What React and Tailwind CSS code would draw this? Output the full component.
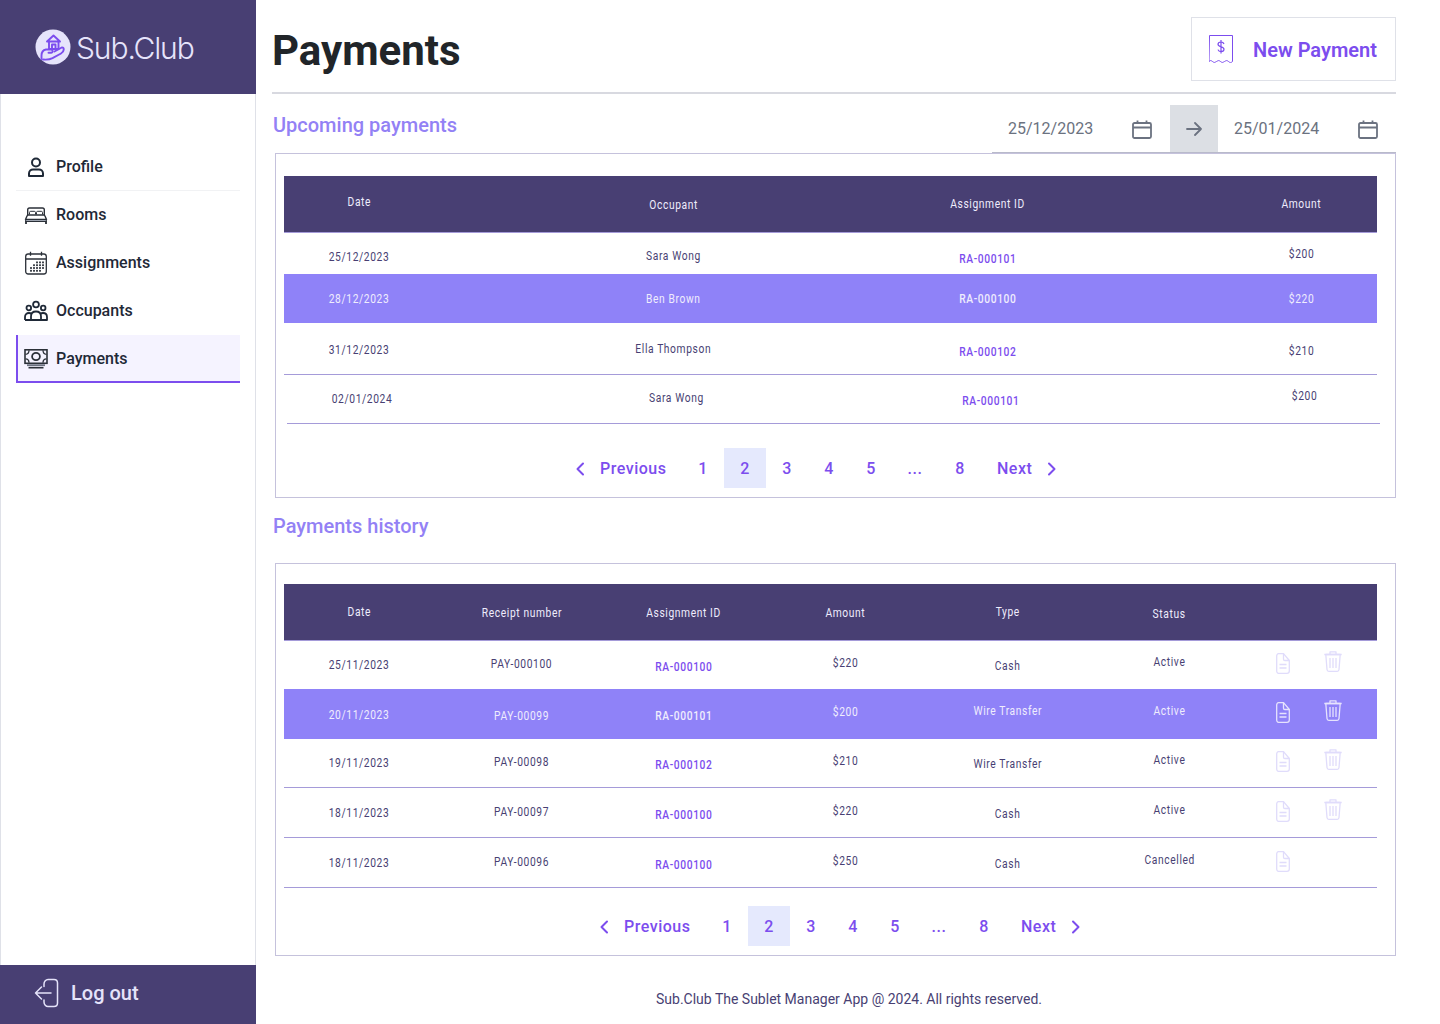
import React from "react";

const roboto = "font-['Roboto','Liberation_Sans',sans-serif]";

function Logo() {
  return (
    <svg width="36" height="36" viewBox="0 0 36 36" fill="none">
      <circle cx="18" cy="18" r="17.500" fill="#e6e4fb" />
      <g stroke="#7c4dee" strokeWidth="1.900" strokeLinejoin="round" strokeLinecap="round">
        <path d="M12 12.500 18.500 6.500 25 12.500Z" />
        <path d="M14 12.500V20H23.500V12.500" />
        <path d="M17 20v-4.500h3.500V20" />
        <path d="M6.500 30v-3.500c0-3 2-5.500 4.500-6h5c2 0 2.500 3 0 3.200h-2.500" />
        <path d="M8 30.500c3.500 .3 7 0 9.500-1.300l8.500-4.700c3.500-2 3.500-6.500 .8-6l-7.300 4" />
      </g>
    </svg>
  );
}

const iconCls = "shrink-0";
function UserIcon() {
  return (
    <svg className={iconCls} width="24" height="24" viewBox="0 0 24 24" fill="none" stroke="#1f2937" strokeWidth="2">
      <circle cx="12" cy="7.500" r="4" />
      <path d="M5 21v-2.500c0-2.500 2-4 4-4h6c2 0 4 1.500 4 4V21Z" strokeLinejoin="round" />
    </svg>
  );
}
function BedIcon() {
  return (
    <svg className={iconCls} width="24" height="24" viewBox="0 0 24 24" fill="none" stroke="#2b3038" strokeWidth="1.400">
      <path d="M3.700 12V6.800C3.700 5.500 4.500 5 5.500 5h13c1 0 1.800.5 1.800 1.800V12" />
      <path d="M5.500 11.500V9.500c0-.8.500-1.200 1.200-1.200h3.600c.7 0 1.200.4 1.200 1.200v2M12.500 11.500V9.500c0-.8.500-1.200 1.200-1.200h3.600c.7 0 1.200.4 1.200 1.200v2" strokeWidth="1" />
      <path d="M1.500 16.500 3 13c.2-.6.600-1 1.300-1h15.400c.7 0 1.100.4 1.300 1L22.500 16.500Z" strokeLinejoin="round" />
      <path d="M1.700 16.500h20.600v2H1.700Z" fill="#9ca3af" strokeWidth="1" />
      <path d="M2 18v3M22 18v3" strokeWidth="1.800" />
    </svg>
  );
}
function CalGridIcon() {
  const dots = [[7, 17], [10, 17], [13, 17], [16, 17], [7, 19.8], [10, 19.8], [13, 19.8], [10, 14.200], [13, 14.200], [16, 14.200], [19, 14.200], [19, 17], [13, 11.400], [16, 11.400], [19, 11.400], [16, 19.8]];
  return (
    <svg className={iconCls} width="24" height="24" viewBox="0 0 24 24" fill="none" stroke="#2b3038" strokeWidth="1.300">
      <rect x="1.700" y="3" width="20.600" height="20" rx="2.500" />
      <path d="M2 8h20M6.500 .8v4M17.500 .8v4" />
      {dots.map(([x, y], i) => (
        <rect key={i} x={x - 0.9} y={y - 0.9} width="1.800" height="1.800" fill="#2b3038" stroke="none" />
      ))}
    </svg>
  );
}
function GroupIcon() {
  return (
    <svg className={iconCls} width="24" height="24" viewBox="0 0 24 24" fill="none" stroke="#1f2937" strokeWidth="1.800">
      <circle cx="12" cy="5.500" r="2.900" />
      <circle cx="4.800" cy="9" r="2.300" />
      <circle cx="19.200" cy="9" r="2.300" />
      <path d="M7 21v-3.500c0-3 2-5 5-5s5 2 5 5V21Z" strokeLinejoin="round" />
      <path d="M1 21h22v-3c0-2.500-1.500-4-4-4-1 0-1.800.2-2.500.8M7.500 14.800C6.800 14.200 6 14 5 14c-2.500 0-4 1.500-4 4v3" strokeLinejoin="round" />
    </svg>
  );
}
function MoneyIcon() {
  return (
    <svg className={iconCls} width="24" height="24" viewBox="0 0 24 24" fill="none" stroke="#2b3038" strokeWidth="1.600">
      <rect x="1" y="2.800" width="22" height="13.500" strokeWidth="1.600" />
      <path d="M1.500 7.300c2 0 3.500-1.500 3.500-4M22.500 7.300c-2 0-3.500-1.500-3.500-4M1.500 11.800c2 0 3.500 1.500 3.500 4M22.500 11.800c-2 0-3.500 1.500-3.500 4" strokeWidth="1.300" />
      <ellipse cx="12" cy="9.500" rx="3.900" ry="3.600" strokeWidth="1.800" />
      <path d="M3 18.200h18" stroke="#6b7280" strokeWidth="1.800" />
      <path d="M4.500 20.700h15" stroke="#2b3038" strokeWidth="1.600" />
    </svg>
  );
}
function LogoutIcon() {
  return (
    <svg width="26" height="30" viewBox="0 0 26 30" fill="none" stroke="#e5e3fa" strokeWidth="1.500" strokeLinecap="round" strokeLinejoin="round">
      <path d="M10 8.500V6c0-2.500 2-4.500 4-4.500h6c2 0 3.500 1.500 3.500 3.500v20c0 2-1.500 3.500-3.500 3.500h-6c-2 0-4-2-4-4.500v-2" />
      <path d="M17 15H1.500M7.500 9 1.500 15l6 6" />
    </svg>
  );
}
function CalendarIcon() {
  return (
    <svg width="20" height="20" viewBox="0 0 20 20" fill="none" stroke="#6b7280" strokeWidth="1.800">
      <rect x="1" y="3" width="18" height="15" rx="1.500" />
      <path d="M1 7.500h18M5.500 .5V4M14.500 .5V4" />
    </svg>
  );
}
function ReceiptIcon() {
  return (
    <svg width="24" height="28" viewBox="0 0 24 28" fill="none" stroke="#7c4dee" strokeWidth="1">
      <path d="M.5.500h23v26c-2 1.500-2 1.500-4 0s-2-1-4 0-2 1.500-4 0-2-1-4 0-2 1.500-4 0-2-1-3.500 0Z" />
      <path d="M15 9c-.5-1.500-1.800-2-3-2-1.700 0-3 .8-3 2.300s1.300 2 3 2.500 3 1 3 2.500-1.300 2.300-3 2.300c-1.200 0-2.500-.5-3-2M12 5v13.500" strokeWidth="1.200" />
    </svg>
  );
}
function ArrowIcon() {
  return (
    <svg width="16" height="14" viewBox="0 0 16 14" fill="none" stroke="#6b7280" strokeWidth="1.800" strokeLinecap="round" strokeLinejoin="round">
      <path d="M1 7h14M9 1l6 6-6 6" />
    </svg>
  );
}
function Chevron({ left }) {
  return (
    <svg width="10" height="14" viewBox="0 0 10 14" fill="none" stroke="#7c4dee" strokeWidth="2" strokeLinecap="round" strokeLinejoin="round" className="mt-[1px]">
      {left ? <path d="M8 1.500 2.500 7 8 12.500" /> : <path d="M2 1.500 7.500 7 2 12.500" />}
    </svg>
  );
}
function DocIcon({ hi }) {
  const c = hi ? "#e6e3fd" : "#e0dcfb";
  return (
    <svg width="14" height="21" viewBox="0 0 14 21" fill="none" stroke={c} strokeWidth="1.300" strokeLinejoin="round">
      <path d="M2.500.7H7.500L13.300 7.500V18c0 1.300-1 2.300-2.300 2.300H2.500C1.500 20.300.7 19.300.7 18V3c0-1.300.8-2.300 1.800-2.300Z" />
      <path d="M7.500.7V6.200c0 .8.500 1.300 1.300 1.300h4.500M3.500 11.500h7M3.500 15h7" />
    </svg>
  );
}
function TrashIcon({ hi }) {
  const c = hi ? "#e6e3fd" : "#e0dcfb";
  return (
    <svg width="18" height="21" viewBox="0 0 18 21" fill="none" stroke={c} strokeWidth="1.300" strokeLinejoin="round">
      <path d="M.3 3.500h17.400M6 3.500V.8h6v2.700" />
      <path d="M1.800 3.500 3 18.500c.1 1 .8 1.800 1.800 1.800h8.400c1 0 1.700-.8 1.800-1.800l1.200-15Z" />
      <path d="M6 7v10M9 7v10M12 7v10" />
    </svg>
  );
}

const nav = [
  { label: "Profile", Icon: UserIcon, cls: "pl-[8px] border-b border-[#f1f2f4]" },
  { label: "Rooms", Icon: BedIcon, cls: "pl-[8px]" },
  { label: "Assignments", Icon: CalGridIcon, cls: "pl-[8px]" },
  { label: "Occupants", Icon: GroupIcon, cls: "pl-[8px]" },
  { label: "Payments", Icon: MoneyIcon, cls: "bg-[#f5f3ff] border-l-2 border-b-2 border-[#7c4dee] pl-[6px] pt-[2px]" },
];

function Sidebar() {
  return (
    <aside className="w-[256px] h-[1024px] shrink-0 flex flex-col border-x border-[#dfe1e8]">
      <div className="-mx-px h-[94px] shrink-0 bg-[#483f73] flex items-center pl-[35px]">
        <Logo />
        <span className="ml-[5px] pt-[3px] text-[30px] font-light tracking-[-1.100px] text-[#e6e4fb] font-['Inter',sans-serif]">Sub.Club</span>
      </div>
      <nav className="flex flex-col mt-[49px] mx-[15px] grow">
        {nav.map(({ label, Icon, cls }) => (
          <div key={label} className={`h-[48px] flex items-center gap-[8px] text-base font-medium text-[#1f2937] ${cls}`}>
            <Icon />
            <span>{label}</span>
          </div>
        ))}
      </nav>
      <div className="-mx-px h-[59px] shrink-0 bg-[#483f73] flex items-center pl-[34px] pb-[3px] gap-[11px] text-[20px] font-medium text-[#e5e3fa]">
        <LogoutIcon />
        <span>Log out</span>
      </div>
    </aside>
  );
}

const cellBase = "text-[12.500px] leading-[14px] text-center whitespace-nowrap pl-[1px]";

function Cell({ pt, link, hi, header, children }) {
  let color = "text-[#483f73]";
  if (header || hi) color = "text-[#efedfd]";
  else if (link) color = "text-[#7c4dee]";
  return (
    <div className={`${cellBase} ${color} ${link ? "font-medium" : ""} ${pt}`}>
      <span className="inline-block scale-x-[0.82] tracking-[0.75px]">{children}</span>
    </div>
  );
}

const grid4 = "grid grid-cols-[repeat(4,150px)] gap-x-[164px] w-[1093px]";
const upcomingHeader = [["Date", "pt-[19px]"], ["Occupant", "pt-[22px]"], ["Assignment ID", "pt-[21px]"], ["Amount", "pt-[21px]"]];
const upcoming = [
  { h: "h-[41px]", extra: "", cells: [["25/12/2023", "pt-[17px]"], ["Sara Wong", "pt-[16px]"], ["RA-000101", "pt-[19px]"], ["$200", "pt-[14px]"]] },
  { h: "h-[49px] bg-[#8f82f8]", hi: true, extra: "", cells: [["28/12/2023", "pt-[18px]"], ["Ben Brown", "pt-[18px]"], ["RA-000100", "pt-[18px]"], ["$220", "pt-[18px]"]] },
  { h: "h-[52px] border-b border-[#a59bd9]", extra: "", cells: [["31/12/2023", "pt-[20px]"], ["Ella Thompson", "pt-[19px]"], ["RA-000102", "pt-[22px]"], ["$210", "pt-[21px]"]] },
  { h: "h-[49px] border-b border-[#a59bd9]", extra: "ml-[3px]", cells: [["02/01/2024", "pt-[17px]"], ["Sara Wong", "pt-[16px]"], ["RA-000101", "pt-[19px]"], ["$200", "pt-[14px]"]] },
];

const grid6 = "grid grid-cols-[repeat(6,150px)_1fr] gap-x-[12px] w-[1093px]";
const historyHeader = [["Date", "pt-[21px]"], ["Receipt number", "pt-[22px]"], ["Assignment ID", "pt-[22px]"], ["Amount", "pt-[22px]"], ["Type", "pt-[21px]"], ["Status", "pt-[23px]"]];
const history = [
  { h: "h-[48px]", doc: "pt-[12px]", trash: "pt-[10px]", del: true, cells: [["25/11/2023", "pt-[17px]"], ["PAY-000100", "pt-[16px]"], ["RA-000100", "pt-[19px]"], ["$220", "pt-[15px]"], ["Cash", "pt-[18px]"], ["Active", "pt-[14px]"]] },
  { h: "h-[50px] bg-[#8f82f8]", hi: true, doc: "pt-[13px]", trash: "pt-[11px]", del: true, cells: [["20/11/2023", "pt-[19px]"], ["PAY-00099", "pt-[20px]"], ["RA-000101", "pt-[20px]"], ["$200", "pt-[16px]"], ["Wire Transfer", "pt-[15px]"], ["Active", "pt-[15px]"]] },
  { h: "h-[49px]", line: true, doc: "pt-[12px]", trash: "pt-[10px]", del: true, cells: [["19/11/2023", "pt-[17px]"], ["PAY-00098", "pt-[16px]"], ["RA-000102", "pt-[19px]"], ["$210", "pt-[15px]"], ["Wire Transfer", "pt-[18px]"], ["Active", "pt-[14px]"]] },
  { h: "h-[50px]", line: true, doc: "pt-[13px]", trash: "pt-[11px]", del: true, cells: [["18/11/2023", "pt-[18px]"], ["PAY-00097", "pt-[17px]"], ["RA-000100", "pt-[20px]"], ["$220", "pt-[16px]"], ["Cash", "pt-[19px]"], ["Active", "pt-[15px]"]] },
  { h: "h-[50px]", line: true, doc: "pt-[13px]", trash: "pt-[11px]", del: false, cells: [["18/11/2023", "pt-[18px]"], ["PAY-00096", "pt-[17px]"], ["RA-000100", "pt-[20px]"], ["$250", "pt-[16px]"], ["Cash", "pt-[19px]"], ["Cancelled", "pt-[15px]"]] },
];

function Pagination({ cls }) {
  const num = "h-[40px] flex items-center justify-center pt-[1px]";
  return (
    <div className={`flex items-center text-base font-medium tracking-[0.5px] text-[#7c4dee] ${cls}`}>
      <Chevron left />
      <span className="ml-[15px] w-[73px] pt-[1px]">Previous</span>
      <span className={`${num} w-[42px] ml-[9px]`}>1</span>
      <span className={`${num} w-[42px] bg-[#e5e9fd]`}>2</span>
      <span className={`${num} w-[42px]`}>3</span>
      <span className={`${num} w-[42px]`}>4</span>
      <span className={`${num} w-[42px]`}>5</span>
      <span className={`${num} w-[46px]`}>...</span>
      <span className={`${num} w-[44px]`}>8</span>
      <span className="ml-[15px] w-[50px] pt-[1px]">Next</span>
      <Chevron />
    </div>
  );
}

function Upcoming() {
  return (
    <div className="h-[345px] border border-[#c5c2dc] pt-[22px] pl-[8px]">
      <div className={`${grid4} h-[57px] bg-[#483f73] border-b border-[#a59bd9]`}>
        {upcomingHeader.map(([t, pt]) => <Cell key={t} header pt={pt}>{t}</Cell>)}
      </div>
      {upcoming.map((r, i) => (
        <div key={i} className={`${grid4} ${r.h} ${r.extra}`}>
          {r.cells.map(([t, pt], j) => <Cell key={j} pt={pt} hi={r.hi} link={j === 2}>{t}</Cell>)}
        </div>
      ))}
      <Pagination cls="mt-[24px] ml-[291px]" />
    </div>
  );
}

function History() {
  return (
    <div className="h-[393px] border border-[#c5c2dc] pt-[20px] pl-[8px] mt-[23px]">
      <div className={`${grid6} h-[57px] bg-[#483f73] border-b border-[#a59bd9]`}>
        {historyHeader.map(([t, pt]) => <Cell key={t} header pt={pt}>{t}</Cell>)}
      </div>
      {history.map((r, i) => (
        <div key={i} className={`${grid6} ${r.h} ${r.line ? "border-b border-[#a59bd9]" : ""}`}>
          {r.cells.map(([t, pt], j) => <Cell key={j} pt={pt} hi={r.hi} link={j === 2}>{t}</Cell>)}
          <div className="flex pl-[20px]">
            <div className={r.doc}><DocIcon hi={r.hi} /></div>
            {r.del && <div className={`ml-[34px] ${r.trash}`}><TrashIcon hi={r.hi} /></div>}
          </div>
        </div>
      ))}
      <Pagination cls="mt-[18px] ml-[315px]" />
    </div>
  );
}

export default function App() {
  return (
    <div className={`flex w-[1440px] h-[1024px] bg-white overflow-hidden ${roboto}`}>
      <Sidebar />
      <main className="w-[1124px] ml-[16px] flex flex-col">
        <header className="h-[94px] shrink-0 border-b-2 border-[#d8d9e0] flex items-start justify-between">
          <h1 className="mt-[24px] text-[42px] leading-[54px] font-bold text-[#212529]">Payments</h1>
          <button className="mt-[17px] w-[205px] h-[64px] border border-[#dfe1e8] flex items-center pl-[17px] gap-[20px] text-[20px] font-semibold text-[#7c4dee]">
            <ReceiptIcon />
            <span className="pt-[2px]">New Payment</span>
          </button>
        </header>
        <div className="h-[59px] shrink-0 flex justify-between items-start">
          <h2 className="ml-[1px] mt-[18px] text-[20px] leading-[27px] font-medium text-[#9381f5]">Upcoming payments</h2>
          <div className="mt-[11px] h-[48px] w-[404px] flex border-b border-[#b9bacb] text-base text-[#6b7280]">
            <div className="w-[178px] flex items-center justify-between pl-[16px] pr-[18px]">
              <span className="pt-[1px]">25/12/2023</span>
              <span className="pt-[2px]"><CalendarIcon /></span>
            </div>
            <div className="w-[48px] bg-[#dcdfe4] flex items-center justify-center pt-[1px]"><ArrowIcon /></div>
            <div className="w-[178px] flex items-center justify-between pl-[16px] pr-[18px]">
              <span className="pt-[1px]">25/01/2024</span>
              <span className="pt-[2px]"><CalendarIcon /></span>
            </div>
          </div>
        </div>
        <div className="ml-[3px]">
          <Upcoming />
          <h2 className="ml-[-2px] mt-[15px] text-[20px] leading-[27px] font-medium text-[#9381f5]">Payments history</h2>
          <History />
        </div>
        <p className="mt-[34px] text-sm leading-[18px] text-center text-[#483f73] pl-[30px]">
          Sub.Club The Sublet Manager App @ 2024. All rights reserved.
        </p>
      </main>
    </div>
  );
}
